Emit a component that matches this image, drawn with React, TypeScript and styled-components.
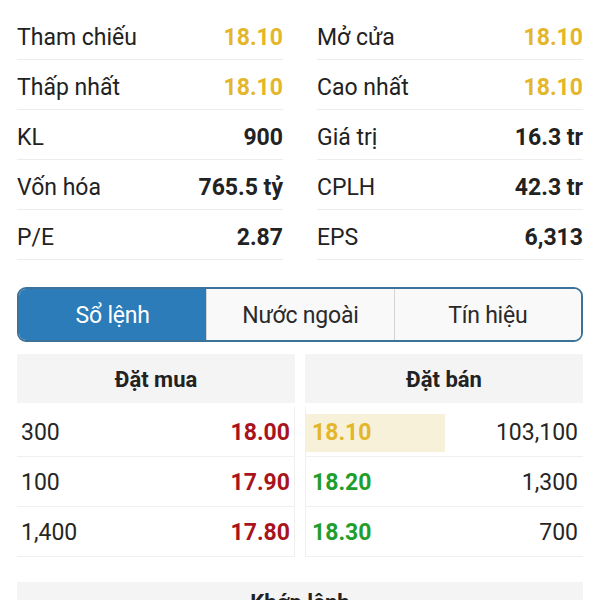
import * as React from 'react'
import styled, { createGlobalStyle } from 'styled-components';

const GlobalStyle = createGlobalStyle`
    html, body {
        margin: 0;
        padding: 0;
        background: #ffffff;
        font-family: Roboto, "Noto Sans", sans-serif;
        color: #222222;
    }
`;

type Tone = 'ref' | 'up' | 'down' | 'plain';

const toneColor : Record<Tone, string> = {
    ref: '#e4b62a',
    up: '#1f9e2c',
    down: '#a8141d',
    plain: '#222222'
};

interface IStat{
    label : string;
    value : string;
    tone : Tone;
}

const leftStats : IStat[] = [
    { label: 'Tham chiếu', value: '18.10', tone: 'ref' },
    { label: 'Thấp nhất', value: '18.10', tone: 'ref' },
    { label: 'KL', value: '900', tone: 'plain' },
    { label: 'Vốn hóa', value: '765.5 tỷ', tone: 'plain' },
    { label: 'P/E', value: '2.87', tone: 'plain' }
];

const rightStats : IStat[] = [
    { label: 'Mở cửa', value: '18.10', tone: 'ref' },
    { label: 'Cao nhất', value: '18.10', tone: 'ref' },
    { label: 'Giá trị', value: '16.3 tr', tone: 'plain' },
    { label: 'CPLH', value: '42.3 tr', tone: 'plain' },
    { label: 'EPS', value: '6,313', tone: 'plain' }
];

const bids = [
    { vol: '300', price: '18.00' },
    { vol: '100', price: '17.90' },
    { vol: '1,400', price: '17.80' }
];

const asks : { price : string; vol : string; tone : Tone; mark? : boolean }[] = [
    { price: '18.10', vol: '103,100', tone: 'ref', mark: true },
    { price: '18.20', vol: '1,300', tone: 'up' },
    { price: '18.30', vol: '700', tone: 'up' }
];

const tabs = ['Sổ lệnh', 'Nước ngoài', 'Tín hiệu'];

export default function App() : React.ReactElement{

    const [activeTab, setActiveTab] = React.useState<number>(0);

    function renderStats(list : IStat[]){
        return (
            <StatColumn>
                {list.map((s) => (
                    <StatRow key={s.label}>
                        <StatLabel>{s.label}</StatLabel>
                        <StatValue tone={s.tone}>{s.value}</StatValue>
                    </StatRow>
                ))}
            </StatColumn>
        );
    }

    return (<>
        <GlobalStyle/>
        <Page>
            <StatsGrid>
                {renderStats(leftStats)}
                {renderStats(rightStats)}
            </StatsGrid>

            <Tabs>
                {tabs.map((t, i) => (
                    <Tab key={t} active={i === activeTab} onClick={() => setActiveTab(i)}>{t}</Tab>
                ))}
            </Tabs>

            <Book>
                <BookSide>
                    <BookHeader>Đặt mua</BookHeader>
                    {bids.map((b) => (
                        <BookRow key={b.price} side='bid'>
                            <Volume>{b.vol}</Volume>
                            <Price tone='down'>{b.price}</Price>
                        </BookRow>
                    ))}
                </BookSide>
                <BookSide>
                    <BookHeader>Đặt bán</BookHeader>
                    {asks.map((a) => (
                        <BookRow key={a.price} side='ask'>
                            <Price tone={a.tone} mark={a.mark}>{a.price}</Price>
                            <Volume>{a.vol}</Volume>
                        </BookRow>
                    ))}
                </BookSide>
            </Book>

            <MatchHeader>Khớp lệnh</MatchHeader>
        </Page>
    </>);
}

const Page = styled.div`
    width: 600px;
    height: 600px;
    overflow: hidden;
    padding: 10px 17px 0 17px;
    box-sizing: border-box;
`;

const StatsGrid = styled.div`
    display: grid;
    grid-template-columns: 1fr 1fr;
    column-gap: 34px;
`;

const StatColumn = styled.div`
    display: flex;
    flex-direction: column;
`;

const StatRow = styled.div`
    height: 50px;
    display: flex;
    align-items: center;
    justify-content: space-between;
    border-bottom: 1px solid #ececec;
    box-sizing: border-box;
    padding-top: 5px;
`;

const StatLabel = styled.span`
    font-size: 23px;
    color: #222222;
`;

const StatValue = styled.span<{ tone : Tone }>`
    font-size: 23px;
    font-weight: 700;
    color: ${(p) => toneColor[p.tone]};
`;

const Tabs = styled.div`
    margin-top: 27px;
    height: 55px;
    display: grid;
    grid-template-columns: 1fr 1fr 1fr;
    border: 2px solid #3d7298;
    border-radius: 9px;
    overflow: hidden;
    box-sizing: border-box;
`;

const Tab = styled.div<{ active : boolean }>`
    display: flex;
    align-items: center;
    justify-content: center;
    font-size: 23px;
    letter-spacing: -0.2px;
    padding-top: 2px;
    cursor: pointer;
    background: ${(p) => p.active ? '#2b7cb8' : '#f9f9f9'};
    color: ${(p) => p.active ? '#ffffff' : '#2a2a2a'};
    & + & {
        border-left: 1px solid #d4d4d4;
    }
`;

const Book = styled.div`
    margin-top: 12px;
    display: grid;
    grid-template-columns: 278px 278px;
    column-gap: 10px;
`;

const BookSide = styled.div`
    display: flex;
    flex-direction: column;
`;

const BookHeader = styled.div`
    height: 49px;
    display: flex;
    align-items: center;
    justify-content: center;
    background: #f4f4f4;
    font-size: 22px;
    font-weight: 700;
    color: #222222;
    margin-bottom: 4px;
    padding-top: 2px;
    box-sizing: border-box;
`;

const BookRow = styled.div<{ side : 'bid' | 'ask' }>`
    height: 50px;
    display: flex;
    align-items: center;
    justify-content: space-between;
    border-bottom: 1px solid #f0f0f0;
    box-sizing: border-box;
    padding: ${(p) => p.side === 'bid' ? '2px 4px 0 4px' : '2px 5px 0 0'};
    ${(p) => p.side === 'bid' ? 'border-right: 1px solid #efefef;' : 'border-left: 1px solid #efefef;'}
`;

const Volume = styled.span`
    font-size: 23px;
    color: #262626;
`;

const Price = styled.span<{ tone : Tone; mark? : boolean }>`
    font-size: 23px;
    font-weight: 700;
    color: ${(p) => toneColor[p.tone]};
    ${(p) => p.mark ? `
        background: #f8f1da;
        width: 139px;
        height: 38px;
        display: flex;
        align-items: center;
        padding-left: 6px;
        box-sizing: border-box;
    ` : 'padding-left: 6px;'}
`;

const MatchHeader = styled.div`
    margin-top: 25px;
    height: 50px;
    background: #f4f4f4;
    display: flex;
    align-items: flex-start;
    justify-content: center;
    font-size: 22px;
    font-weight: 700;
    padding-top: 8px;
    box-sizing: border-box;
`;
